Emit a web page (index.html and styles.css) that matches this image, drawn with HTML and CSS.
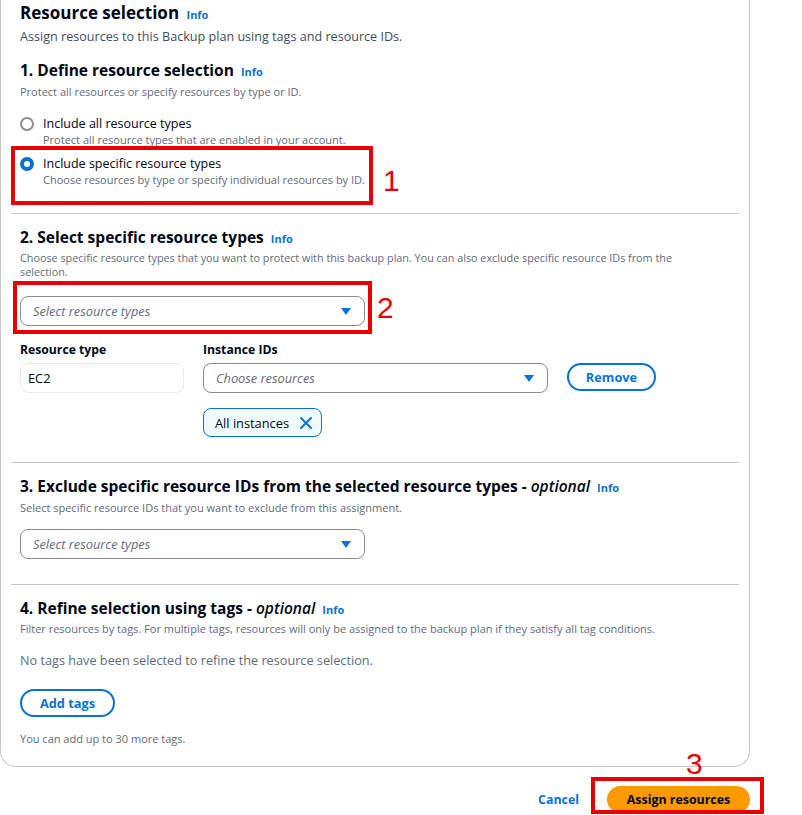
FILE: index.html
```html
<!DOCTYPE html>
<html lang="en">
<head>
<meta charset="utf-8">
<title>Resource selection</title>
<link rel="stylesheet" href="styles.css">
</head>
<body>
<div class="page">
  <div class="card">
    <section class="sec sec-first">
      <h2 class="title">Resource selection <a class="info">Info</a></h2>
      <p class="lead">Assign resources to this Backup plan using tags and resource IDs.</p>
      <h3 class="h h-first">1. Define resource selection <a class="info">Info</a></h3>
      <p class="desc">Protect all resources or specify resources by type or ID.</p>
      <div class="radios">
        <div class="radio">
          <span class="dot"></span>
          <div class="rtext">
            <div class="rlabel">Include all resource types</div>
            <div class="rdesc">Protect all resource types that are enabled in your account.</div>
          </div>
        </div>
        <div class="radio mark">
          <span class="dot dot-on"></span>
          <div class="rtext">
            <div class="rlabel">Include specific resource types</div>
            <div class="rdesc">Choose resources by type or specify individual resources by ID.</div>
          </div>
          <span class="mark-box box1"></span>
          <span class="mark-num num1">1</span>
        </div>
      </div>
    </section>

    <section class="sec sec-2">
      <h3 class="h">2. Select specific resource types <a class="info">Info</a></h3>
      <p class="desc desc-narrow">Choose specific resource types that you want to protect with this backup plan. You can also exclude specific resource IDs from the selection.</p>
      <div class="mark select-wrap">
        <div class="select"><span class="ph">Select resource types</span><svg class="caret" width="10" height="7" viewBox="0 0 10 7"><path d="M0 0 H10 L5 7 Z" fill="#0972d3"/></svg></div>
        <span class="mark-box box2"></span>
        <span class="mark-num num2">2</span>
      </div>
      <div class="rt-grid">
        <div class="field f-type">
          <div class="flabel">Resource type</div>
          <div class="ro-input">EC2</div>
        </div>
        <div class="field f-ids">
          <div class="flabel">Instance IDs</div>
          <div class="select"><span class="ph">Choose resources</span><svg class="caret" width="10" height="7" viewBox="0 0 10 7"><path d="M0 0 H10 L5 7 Z" fill="#0972d3"/></svg></div>
          <div class="token">All instances <svg class="x" width="12" height="12" viewBox="0 0 12 12"><path d="M1 1 L11 11 M11 1 L1 11" stroke="#0972d3" stroke-width="2" fill="none" stroke-linecap="round"/></svg></div>
        </div>
        <div class="f-btn">
          <button class="btn-normal btn-remove">Remove</button>
        </div>
      </div>
    </section>

    <section class="sec sec-3">
      <h3 class="h">3. Exclude specific resource IDs from the selected resource types - <i class="opt">optional</i> <a class="info">Info</a></h3>
      <p class="desc">Select specific resource IDs that you want to exclude from this assignment.</p>
      <div class="select select-3"><span class="ph">Select resource types</span><svg class="caret" width="10" height="7" viewBox="0 0 10 7"><path d="M0 0 H10 L5 7 Z" fill="#0972d3"/></svg></div>
    </section>

    <section class="sec sec-last">
      <h3 class="h">4. Refine selection using tags - <i class="opt">optional</i> <a class="info">Info</a></h3>
      <p class="desc desc-4">Filter resources by tags. For multiple tags, resources will only be assigned to the backup plan if they satisfy all tag conditions.</p>
      <p class="empty">No tags have been selected to refine the resource selection.</p>
      <button class="btn-normal btn-add">Add tags</button>
      <p class="hint">You can add up to 30 more tags.</p>
    </section>
  </div>

  <div class="footer">
    <button class="btn-link">Cancel</button>
    <div class="mark">
      <button class="btn-primary">Assign resources</button>
      <span class="mark-box box3"></span>
      <span class="mark-num num3">3</span>
    </div>
  </div>
</div>
</body>
</html>
```

FILE: styles.css
```css
* { box-sizing: border-box; }
html, body { margin: 0; padding: 0; background: #ffffff; }
body {
  font-family: "Open Sans", "Noto Sans", Arial, sans-serif;
  color: #000716;
  width: 802px;
  height: 815px;
  overflow: hidden;
}
p, h2, h3 { margin: 0; }

.page { width: 802px; }

.card {
  width: 750px;
  border: 1px solid #c6c6cd;
  border-top: none;
  border-radius: 0 0 16px 16px;
  padding: 0 10px;
}

.sec {
  padding: 13px 0 25px 9px;
  border-bottom: 1px solid #c6c6cd;
}
.sec-first { padding-top: 1px; padding-bottom: 26px; }
.sec-2 { padding-top: 13px; padding-bottom: 25px; }
.sec-3 { padding-top: 13px; padding-bottom: 25px; }
.sec-last { border-bottom: none; padding-bottom: 19px; }

.title {
  font-size: 17px;
  line-height: 24px;
  font-weight: 700;
}
.info {
  font-size: 11px;
  font-weight: 700;
  color: #0972d3;
  margin-left: 3px;
}
.lead {
  margin-top: 2px;
  font-size: 12.6px;
  line-height: 16px;
  color: #414d5c;
}
.h {
  font-size: 15.5px;
  line-height: 20px;
  font-weight: 700;
}
.h-first { margin-top: 15px; }
.opt { font-weight: 600; }
.desc {
  margin-top: 3px;
  font-size: 11px;
  line-height: 14px;
  color: #5f6b7a;
}
.desc-narrow {
  margin-top: 2px;
  max-width: 690px;
  font-size: 10.8px;
}
.desc-4 { margin-top: 2px; }

.radios {
  margin-top: 16px;
  display: flex;
  flex-direction: column;
  gap: 8px;
}
.radio {
  display: flex;
  align-items: flex-start;
  gap: 9px;
}
.dot {
  flex: none;
  width: 14px;
  height: 14px;
  margin-top: 2px;
  border-radius: 50%;
  border: 2px solid #8c8c94;
  background: #fff;
}
.dot-on {
  border: 4.5px solid #0972d3;
}
.rlabel {
  font-size: 12.5px;
  line-height: 18px;
}
.rdesc {
  font-size: 11px;
  line-height: 14px;
  color: #5f6b7a;
}

.mark { position: relative; }
.mark-box {
  position: absolute;
  border: 4px solid #e60000;
  pointer-events: none;
}
.mark-num {
  position: absolute;
  font-family: "Liberation Sans", Arial, sans-serif;
  font-size: 30px;
  line-height: 30px;
  color: #e60000;
}
.box1 { left: -9px; top: -9px; width: 362px; height: 59px; }
.num1 { left: 363px; top: 11px; }

.select-wrap { margin-top: 17px; width: 345px; }
.box2 { left: -7px; top: -15px; width: 359px; height: 53px; }
.num2 { left: 357px; top: -3px; }

.select {
  position: relative;
  display: flex;
  align-items: center;
  justify-content: space-between;
  height: 30px;
  border: 1px solid #8c8c94;
  border-radius: 8px;
  padding: 0 13px 0 12px;
  background: #fff;
}
.select-3 { margin-top: 14px; width: 345px; }
.ph {
  font-style: italic;
  font-size: 12.8px;
  color: #5f6b7a;
}
.caret { display: block; }

.rt-grid {
  margin-top: 16px;
  display: flex;
  align-items: flex-start;
}
.f-type { width: 164px; margin-right: 19px; }
.f-ids { width: 345px; margin-right: 19px; }
.f-btn { padding-top: 21px; }
.flabel {
  font-size: 12.2px;
  line-height: 16px;
  font-weight: 700;
  margin-bottom: 5px;
}
.ro-input {
  height: 30px;
  border: 1px solid #e9ebed;
  border-radius: 8px;
  padding: 0 7px;
  display: flex;
  align-items: center;
  font-size: 12.8px;
}
.token {
  margin-top: 15px;
  display: inline-flex;
  align-items: center;
  gap: 11px;
  height: 29px;
  padding: 0 9px 0 11px;
  border: 1px solid #0972d3;
  border-radius: 8px;
  background: #f0fbff;
  font-size: 12.8px;
}
.x { display: block; }

button { font-family: inherit; cursor: pointer; }
.btn-normal {
  display: inline-flex;
  align-items: center;
  justify-content: center;
  height: 28px;
  border: 2px solid #0972d3;
  border-radius: 20px;
  background: #fff;
  color: #0972d3;
  font-weight: 700;
  font-size: 12.8px;
}
.btn-remove { width: 89px; }
.btn-add { width: 95px; margin-top: 20px; }

.empty {
  margin-top: 15px;
  font-size: 12.7px;
  line-height: 18px;
  color: #5f6b7a;
}
.hint {
  margin-top: 14px;
  font-size: 11px;
  line-height: 16px;
  color: #5f6b7a;
}

.footer {
  width: 750px;
  margin-top: 19px;
  display: flex;
  justify-content: flex-end;
  align-items: center;
  gap: 14px;
}
.btn-link {
  border: none;
  background: none;
  color: #0972d3;
  font-weight: 700;
  font-size: 12.4px;
  padding: 0 14px;
}
.btn-primary {
  display: block;
  width: 143px;
  height: 27px;
  border: none;
  border-radius: 20px;
  background: #ff9900;
  color: #000716;
  font-weight: 700;
  font-size: 12.4px;
}
.box3 { left: -16px; top: -9px; width: 173px; height: 37px; }
.num3 { left: 79px; top: -37px; }
```
